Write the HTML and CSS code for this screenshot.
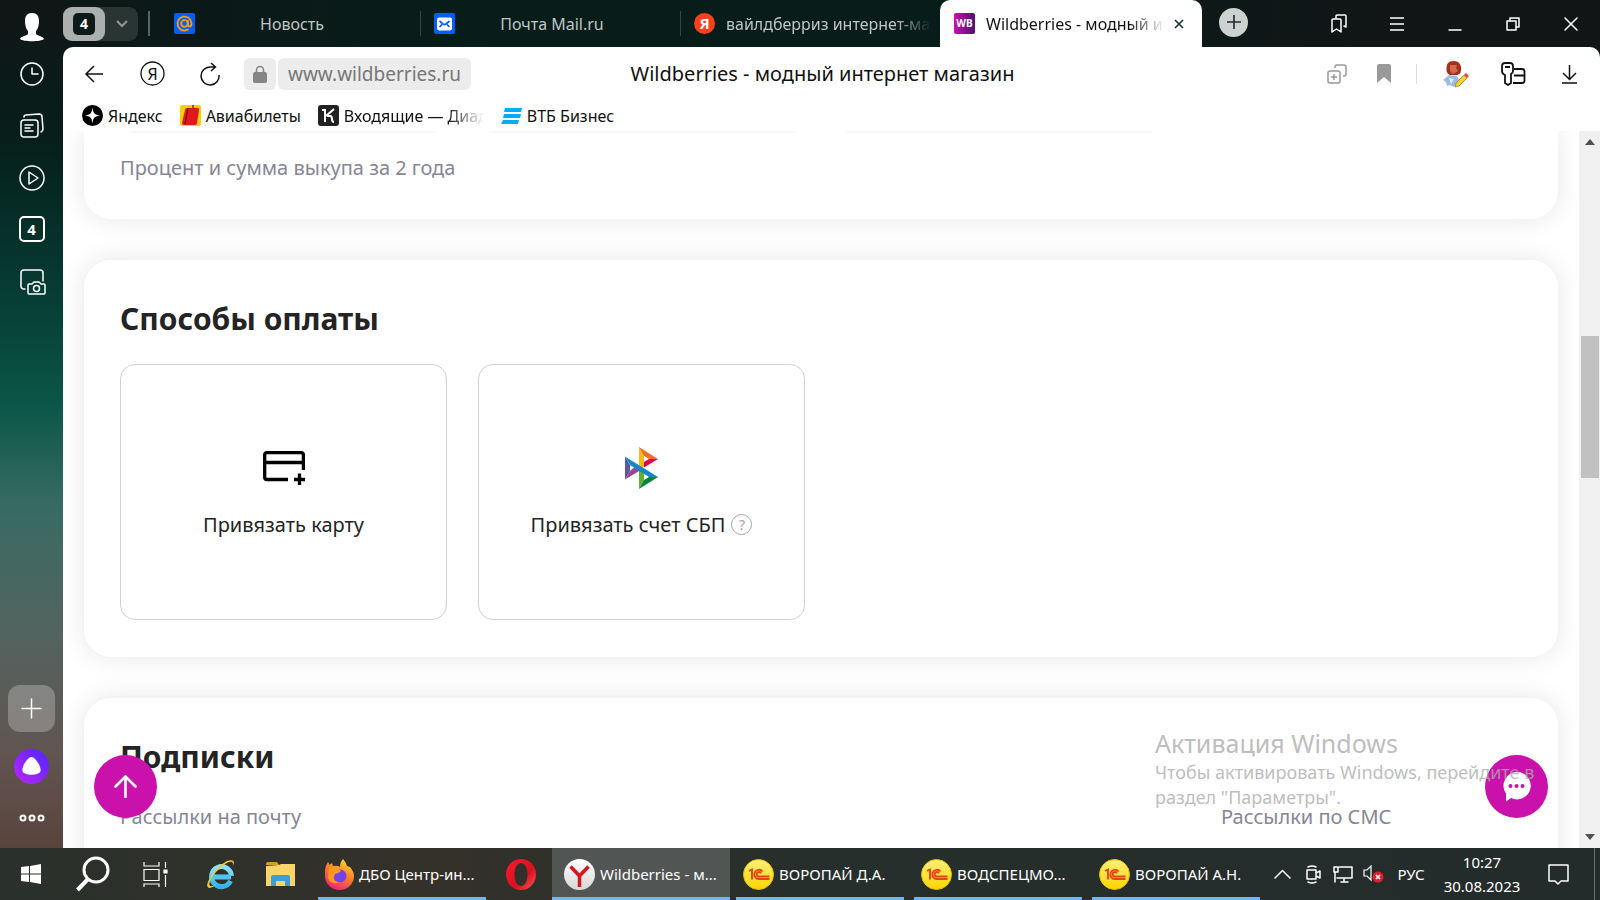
FILE: index.html
```html
<!DOCTYPE html>
<html lang="ru">
<head>
<meta charset="utf-8">
<title>Wildberries - модный интернет магазин</title>
<link rel="stylesheet" href="styles.css">
</head>
<body>
<svg class="defs" aria-hidden="true">
  <defs>
    <linearGradient id="wb" x1="0" y1="0" x2="1" y2="0"><stop offset="0" stop-color="#cb11ab"/><stop offset="1" stop-color="#4a1173"/></linearGradient>
    <linearGradient id="alice" x1="1" y1="0" x2="0" y2="1"><stop offset="0" stop-color="#4a26ff"/><stop offset="1" stop-color="#c026ff"/></linearGradient>
    <linearGradient id="gold" x1="0" y1="0" x2="0" y2="1"><stop offset="0" stop-color="#fff07a"/><stop offset="1" stop-color="#fbd500"/></linearGradient>
    <linearGradient id="fox" x1="0.8" y1="0" x2="0.3" y2="1"><stop offset="0" stop-color="#ffe226"/><stop offset="0.5" stop-color="#ff7a2a"/><stop offset="1" stop-color="#f0207a"/></linearGradient>
    <linearGradient id="opera" x1="0" y1="0" x2="1" y2="1"><stop offset="0" stop-color="#ff1b2d"/><stop offset="0.6" stop-color="#d8101f"/><stop offset="1" stop-color="#ff5a50"/></linearGradient>
    <linearGradient id="ie" x1="0" y1="0" x2="0" y2="1"><stop offset="0" stop-color="#8fe3ff"/><stop offset="1" stop-color="#2fb4ee"/></linearGradient>
    <linearGradient id="silver" x1="0" y1="0" x2="0" y2="1"><stop offset="0" stop-color="#ffffff"/><stop offset="1" stop-color="#d6d6d6"/></linearGradient>
    <symbol id="onec" viewBox="0 0 31 31">
      <circle cx="15.500" cy="15.500" r="15" fill="url(#gold)" stroke="#e8bd00"/>
      <path d="M6 12 9 10.500V20.500M19.500 12.500A4.600 4.600 0 1 0 16 20h10.500M18 14.500A2.200 2.200 0 1 0 16 17.500h10.500" fill="none" stroke="#e8421f" stroke-width="1.900"/>
    </symbol>
  </defs>
</svg>
<div class="desktop">
  <nav class="sidebar" aria-label="Боковая панель">
    <button class="side-btn avatar" aria-label="Профиль"><svg width="26" height="30" viewBox="0 0 26 30"><path fill="#fff" d="M13 1c5 0 7 3 7 8 0 4-1 8-3 10v3c2 2 7 2 8 5-3 3-21 3-24 0 1-3 6-3 8-5v-3c-2-2-3-6-3-10 0-5 2-8 7-8z"/></svg></button>
    <button class="side-btn" aria-label="История"><svg width="28" height="28" viewBox="0 0 28 28" class="line"><circle cx="14" cy="14" r="11"/><path d="M14 8v6h6"/></svg></button>
    <button class="side-btn" aria-label="Коллекции"><svg width="28" height="28" viewBox="0 0 28 28" class="line"><rect x="3" y="8" width="17" height="17" rx="3"/><path d="M6 5c0-1 1-2 2-2l13-1q3 0 3 3l1 12q0 2-2 3M7 13h8M7 16h5M7 19h8"/></svg></button>
    <button class="side-btn" aria-label="Видео"><svg width="28" height="28" viewBox="0 0 28 28" class="line"><circle cx="14" cy="14" r="12"/><path d="M11 8v12l9-6z"/></svg></button>
    <button class="side-btn boxed" aria-label="Вкладки">4</button>
    <button class="side-btn" aria-label="Скриншот"><svg width="28" height="28" viewBox="0 0 28 28" class="line"><path d="M7 21H6q-3 0-3-3V5q0-3 3-3h16q3 0 3 3v8M11 16h3l2-2h5l2 2h3q1 0 1 1v8q0 1-1 1H11q-1 0-1-1v-8q0-1 1-1z"/><circle cx="18.500" cy="20.500" r="3"/></svg></button>
    <span class="spacer"></span>
    <button class="side-add" aria-label="Добавить"><svg width="21" height="21" viewBox="0 0 21 21" class="line"><path d="M10.500 1v19M1 10.500h19"/></svg></button>
    <button class="side-btn alice" aria-label="Алиса"><svg width="35" height="35" viewBox="0 0 35 35"><circle cx="17.500" cy="17.500" r="17.500" fill="url(#alice)"/><path d="M17.500 8c4 0 10 10 9 14-1 5-17 5-18 0-1-4 5-14 9-14z" fill="#fff"/></svg></button>
    <button class="side-btn more" aria-label="Ещё"><svg width="26" height="10" viewBox="0 0 26 10" class="line bold"><circle cx="4" cy="5" r="2.500"/><circle cx="13" cy="5" r="2.500"/><circle cx="22" cy="5" r="2.500"/></svg></button>
  </nav>

  <header class="tabbar">
    <div class="group">
      <button class="group-count" aria-label="Группа вкладок, 4"><span class="house">4</span></button>
      <button class="group-drop" aria-label="Список групп"><svg width="14" height="10" viewBox="0 0 14 10"><path d="M2 2l5 5 5-5" fill="none" stroke="#8f9896" stroke-width="2"/></svg></button>
    </div>
    <div class="tabs">
      <button class="tab"><svg width="21" height="21" viewBox="0 0 21 21"><rect width="21" height="21" rx="2" fill="#005ff9"/><g fill="none" stroke="#ff9e00" stroke-width="1.800"><circle cx="10.500" cy="10.500" r="3.300"/><path d="M13.800 7v4.500c0 3 3.700 2.600 3.700-1a7 7 0 1 0-3 5.800"/></g></svg><span class="tab-text">Новость</span></button>
      <button class="tab"><svg width="21" height="21" viewBox="0 0 21 21"><rect width="21" height="21" rx="2" fill="#005ff9"/><rect x="3" y="4.500" width="15" height="13" rx="2" fill="#fff"/><path d="M5.500 8l3.500 3q1.500 1 3 0l3.500-3M5.500 14l2.500-2.500M15.500 14 13 11.500" fill="none" stroke="#005ff9" stroke-width="1.700"/></svg><span class="tab-text">Почта Mail.ru</span></button>
      <button class="tab"><svg width="21" height="21" viewBox="0 0 21 21"><circle cx="10.500" cy="10.500" r="10.500" fill="#fc3f1d"/><text x="10.500" y="16" class="ya-letter" fill="#fff">Я</text></svg><span class="tab-text fade left">вайлдберриз интернет-ма</span></button>
      <div class="tab active"><svg width="21" height="21" viewBox="0 0 21 21"><rect width="21" height="21" rx="2" fill="url(#wb)"/><text x="10.500" y="14" class="wb-letter" fill="#fff">WB</text></svg><span class="tab-text fade left">Wildberries - модный и</span><button class="tab-close" aria-label="Закрыть вкладку"><svg width="10" height="10" viewBox="0 0 10 10"><path d="M1 1l8 8M9 1 1 9" stroke="#1c2a33" stroke-width="1.600"/></svg></button></div>
    </div>
    <button class="new-tab" aria-label="Новая вкладка"><svg width="14" height="14" viewBox="0 0 14 14"><path d="M7 0v14M0 7h14" stroke="#1c2a33" stroke-width="1.600"/></svg></button>
    <div class="window-controls">
      <button aria-label="Закладки"><svg width="18" height="20" viewBox="0 0 18 20" class="line"><path d="M2 6q0-1 1-1h7q1 0 1 1v12l-4.500-3L2 18zM6 4V2q0-1 1-1h8q1 0 1 1v11l-2-1"/></svg></button>
      <button aria-label="Меню"><svg width="14" height="14" viewBox="0 0 14 14" class="line"><path d="M0 1h14M0 7h14M0 13h14"/></svg></button>
      <button aria-label="Свернуть"><svg width="14" height="14" viewBox="0 0 14 14" class="line"><path d="M1 13h12"/></svg></button>
      <button aria-label="Восстановить"><svg width="14" height="14" viewBox="0 0 14 14" class="line"><path d="M1 4h9v9H1zM4 4V1h9v9h-3"/></svg></button>
      <button aria-label="Закрыть"><svg width="14" height="14" viewBox="0 0 14 14" class="line"><path d="M1 1l12 12M13 1 1 13"/></svg></button>
    </div>
  </header>

  <div class="browser">
    <div class="toolbar">
      <div class="nav">
        <button aria-label="Назад"><svg width="20" height="20" viewBox="0 0 20 20" class="ink"><path d="M19 10H2M10 2l-8 8 8 8"/></svg></button>
        <button aria-label="Яндекс"><svg width="25" height="25" viewBox="0 0 25 25"><circle cx="12.500" cy="12.500" r="11.500" fill="none" stroke="#111" stroke-width="1.300"/><text x="12.500" y="18.500" class="ya-nav" fill="#111">Я</text></svg></button>
        <button aria-label="Обновить"><svg width="22" height="24" viewBox="0 0 22 24" class="ink"><path d="M20 13a9 9 0 1 1-9-8h5M12 1l4.500 4L12 9"/></svg></button>
      </div>
      <div class="address">
        <button class="lock" aria-label="Защищённое соединение"><svg width="14" height="18" viewBox="0 0 14 18"><rect y="7" width="14" height="11" rx="2" fill="#858585"/><path d="M3.500 8V5a3.500 3.500 0 0 1 7 0v3" fill="none" stroke="#858585" stroke-width="1.600"/></svg></button>
        <a class="url" href="#">www.wildberries.ru</a>
      </div>
      <div class="page-title">Wildberries - модный интернет магазин</div>
      <div class="tools">
        <button aria-label="Добавить в коллекцию"><svg width="20" height="20" viewBox="0 0 20 20" class="ink gray"><rect x="1" y="7" width="12" height="12" rx="2"/><path d="M7 10v6M4 13h6M8 4V3q0-2 2-2h7q2 0 2 2v7q0 2-2 2h-1"/></svg></button>
        <button aria-label="В закладки"><svg width="14" height="19" viewBox="0 0 14 19"><path d="M0 2q0-2 2-2h10q2 0 2 2v17l-7-6-7 6z" fill="#999"/></svg></button>
        <span class="rule"></span>
        <button aria-label="Расширение"><svg width="28" height="28" viewBox="0 0 28 28"><path d="M2 20l6-5 8 1 2 4-5 7-4-2-3 1-1-4z" fill="#9db9e0"/><path d="M8 18l5 1-3 5z" fill="#e6effa"/><path d="M6 5q1-4 7-4t7 6q1 7-4 8H9Q4 13 6 5z" fill="#a4301c"/><path d="M9 5h7l-1 3 2 3-5 3-3-3z" fill="#d36a4d"/><path d="M15 23l8-8 3 3-8 8-4 1z" fill="#f5cf2f" stroke="#8c7424" stroke-width=".7"/><path d="M23 15l2-2 3 3-2 2z" fill="#e34b30"/></svg></button>
        <button aria-label="Пароли"><svg width="25" height="24" viewBox="0 0 25 24" class="ink thick"><path d="M12 6.500V4q0-3-3-3H4Q1 1 1 4v5q0 3 3 4v8l3 2 3-2v-9q2-1 2-3zM4 5h5M13 7h8q2.500 0 2.500 2.500v9q0 2.500-2.500 2.500h-9M13 13.500h10.500"/></svg></button>
        <button aria-label="Загрузки"><svg width="17" height="20" viewBox="0 0 17 20" class="ink"><path d="M8.500 1v14M2 9l6.500 6.500L15 9M1 19h15"/></svg></button>
      </div>
    </div>
    <div class="bookmarks">
      <a href="#"><svg width="21" height="21" viewBox="0 0 21 21"><circle cx="10.500" cy="10.500" r="10.500"/><path d="M10.500 2.500c.8 6 2 7.200 8 8-6 .8-7.200 2-8 8-.8-6-2-7.200-8-8 6-.8 7.200-2 8-8z" fill="#fff"/></svg><span>Яндекс</span></a>
      <a href="#"><svg width="21" height="21" viewBox="0 0 21 21"><rect width="21" height="21" rx="2" fill="#fc0"/><path d="M5 5q0-2 2-2h11q1 0 1 2l-2 13q0 2-2 2H4q-2 0-2-2z" fill="#e1171e"/><path d="M8 3l-3 16M13 3V0" stroke="#7c0c10" stroke-width="1.300"/></svg><span>Авиабилеты</span></a>
      <a href="#" class="long"><svg width="21" height="21" viewBox="0 0 21 21"><rect width="21" height="21" rx="3" fill="#222"/><path d="M4 5h3v12M8 11l8-7M9 11h3q2 0 2 3t2 3" fill="none" stroke="#fff" stroke-width="2"/></svg><span class="fade">Входящие — Диад</span></a>
      <a href="#"><svg width="21" height="16" viewBox="0 0 21 16"><path d="M4 0h17l-1 4H3zM3 6h17l-1 4H2zM2 12h16l-1 4H0z" fill="#00aaff"/></svg><span>ВТБ Бизнес</span></a>
    </div>

    <div class="viewport">
      <main class="page">
        <section class="card first">
          <div class="clipped"><i></i><i></i><i></i></div>
          <p class="muted">Процент и сумма выкупа за 2 года</p>
        </section>
        <section class="card">
          <h2>Способы оплаты</h2>
          <div class="methods">
            <button class="method">
              <span class="method-icon"><svg width="42" height="34" viewBox="0 0 42 34"><path d="M25 28.500H4q-2.300 0-2.300-2.300V4Q1.700 1.700 4 1.700h34.200q2.200 0 2.200 2.300v15M1.700 11.500h38.700M36.500 22.500V34M31 28.500h11" fill="none" stroke="#000" stroke-width="3.300"/></svg></span>
              <span>Привязать карту</span>
            </button>
            <button class="method">
              <span class="method-icon"><svg width="34" height="42" viewBox="0 0 34 42"><path d="M0 9.500v23l5-8.500v-6z" fill="#5b57a2"/><path d="M14 0v23l5-3V9z" fill="#fcb718"/><path d="M14 0l19 12H24l-5-3z" fill="#ee7024"/><path d="M33 12 19 20.500V15l5-3z" fill="#d90751"/><path d="M14 23v19l5-9v-8z" fill="#63b22f"/><path d="M33 30 14 42l5-9 5-3z" fill="#07833b"/><path d="M0 32.500 15 23.500 9.500 20 5 24z" fill="#984995"/><path d="M0 9.500l5 8.500 19 12h9z" fill="#1487c9"/></svg></span>
              <span class="with-help">Привязать счет СБП <i class="help">?</i></span>
            </button>
          </div>
        </section>
        <section class="card last">
          <h2>Подписки</h2>
          <div class="subs"><p class="muted">Рассылки на почту</p><p class="muted">Рассылки по СМС</p></div>
        </section>
      </main>
      <button class="fab up" aria-label="Наверх"><svg width="23" height="23" viewBox="0 0 23 23"><path d="M11.500 22V2M1.500 11.500l10-10 10 10" fill="none" stroke="#fff" stroke-width="2.600" stroke-linecap="round"/></svg></button>
      <button class="fab chat" aria-label="Чат"><svg width="29" height="30" viewBox="0 0 29 30"><path d="M15 0a13.700 13.700 0 1 1-6 26l-5 3.500v-8A13.700 13.700 0 0 1 15 0z" fill="#fff"/><g fill="#cb11ab"><circle cx="8.500" cy="14" r="2"/><circle cx="14.500" cy="14" r="2"/><circle cx="20.500" cy="14" r="2"/></g></svg></button>
      <div class="watermark"><strong>Активация Windows</strong><span>Чтобы активировать Windows, перейдите в раздел "Параметры".</span></div>
      <div class="scrollbar" aria-hidden="true"><i class="arrow-up"></i><i class="thumb"></i><i class="arrow-down"></i></div>
    </div>
  </div>

  <footer class="taskbar">
    <button class="task-icon" aria-label="Пуск"><svg width="20" height="20" viewBox="0 0 20 20"><path d="M0 3l8-1v7.500H0zM9 2l11-2v9.500H9zM0 10.500h8V18l-8-1zM9 10.500h11V20L9 18z" fill="#fff"/></svg></button>
    <button class="task-icon" aria-label="Поиск"><svg width="34" height="36" viewBox="0 0 34 36"><circle cx="20" cy="14" r="12" fill="none" stroke="#fff" stroke-width="3"/><path d="M12 23 1.500 34" stroke="#fff" stroke-width="4"/></svg></button>
    <button class="task-icon" aria-label="Представление задач"><svg width="25" height="25" viewBox="0 0 25 25" fill="none" stroke="#fff" stroke-width="1.200"><path d="M1 7.500h15v11H1zM1 0v4h15V0M1 25v-3h15v3M22.500 0v6M22.500 13v12"/><path d="M21 8h3v3h-3z" fill="#fff"/></svg></button>
    <button class="task-icon ie" aria-label="Internet Explorer"><svg width="31" height="31" viewBox="0 0 31 31"><path d="M8 18h18M25.500 22a10 10 0 1 1 1-5" fill="none" stroke="url(#ie)" stroke-width="5"/><path d="M8 16h18v4H8z" fill="#4cc4f5"/><path d="M4 29q-4-2 1-10Q11 8 22 2q6-2 7 1 0 2-2 5 2-4 0-5-3-1-8 3Q9 13 5 22q-2 6 2 5 2 0 5-2-5 4-8 4z" fill="#f7cb2d"/></svg></button>
    <button class="task-icon" aria-label="Проводник"><svg width="29" height="25" viewBox="0 0 29 25"><path d="M0 2q0-2 2-2h9l2 3H0z" fill="#dc9c13"/><path d="M0 4l13-1 2-1h14v22H0z" fill="#fbd468"/><path d="M5 24v-9q0-2 2-2h15q2 0 2 2v9h-5v-5h-9v5z" fill="#3d9be0"/></svg></button>
    <button class="task"><svg width="29" height="31" viewBox="0 0 29 31"><path d="M18 0q3 3 4 7l3 1q4 5 4 9a14.500 14 0 0 1-29 0Q-1 9 3 3q1 1 1 3l3-2 1 3q5-1 7 1 0-5 3-8z" fill="url(#fox)"/><circle cx="15" cy="17" r="6.500" fill="#7542e5"/><path d="M4 9q6-4 10 1l2 2q-3 3-6 3-4 8 5 8-9 4-12-4z" fill="#ff9a1f"/></svg><span>ДБО Центр-ин...</span></button>
    <button class="task-icon opera" aria-label="Opera"><svg width="30" height="31" viewBox="0 0 30 31"><path fill-rule="evenodd" d="M15 0a15 15.500 0 1 0 0 31 15 15.500 0 1 0 0-31zm0 4c4 0 6.500 5 6.500 11.500S19 27 15 27s-6.500-5-6.500-11.500S11 4 15 4z" fill="url(#opera)"/></svg></button>
    <button class="task current"><svg width="31" height="31" viewBox="0 0 31 31"><circle cx="15.500" cy="15.500" r="15.500" fill="url(#silver)"/><path d="M6.500 7.500 15.500 17l9-9.500M15.500 16v12" fill="none" stroke="#d8141c" stroke-width="3.500"/></svg><span>Wildberries - м...</span></button>
    <button class="task"><svg width="31" height="31"><use href="#onec"/></svg><span>ВОРОПАЙ Д.А.</span></button>
    <button class="task"><svg width="31" height="31"><use href="#onec"/></svg><span>ВОДСПЕЦМО...</span></button>
    <button class="task"><svg width="31" height="31"><use href="#onec"/></svg><span>ВОРОПАЙ А.Н.</span></button>
    <div class="tray">
      <button aria-label="Скрытые значки"><svg width="17" height="10" viewBox="0 0 17 10" class="line"><path d="M1 9l7.500-7.500L16 9"/></svg></button>
      <button aria-label="Камера"><svg width="15" height="19" viewBox="0 0 15 19" class="line"><path d="M1 5h9v9H1zM10 8l4-2v7l-4-2M2 2q4-2 8 0M2 17q4 2 8 0"/></svg></button>
      <button aria-label="Сеть"><svg width="20" height="17" viewBox="0 0 20 17" class="line"><path d="M6 1h13v11H4M11 12v4M8 16h7M1 1h4v5H1zM2 6v10"/></svg></button>
      <button aria-label="Звук выключен"><svg width="21" height="18" viewBox="0 0 21 18"><path d="M1 5h3l4-4v14l-4-4H1z" fill="none" stroke="#fff" stroke-width="1.200"/><circle cx="15" cy="12" r="5.500" fill="#e0202c"/><path d="M13 10l4 4M17 10l-4 4" stroke="#fff" stroke-width="1.500"/></svg></button>
      <button class="lang">РУС</button>
      <button class="clock"><time>10:27</time><time>30.08.2023</time></button>
      <button class="notify" aria-label="Уведомления"><svg width="21" height="21" viewBox="0 0 21 21" class="line"><path d="M1 1h19v16h-7l-3 3-3-3H1z"/></svg></button>
    </div>
  </footer>
</div>
</body>
</html>
```
FILE: styles.css
```css
* { box-sizing: border-box; }
body { margin: 0; font-family: "Noto Sans", "Open Sans", sans-serif; color: #242424; }
button { border: 0; padding: 0; margin: 0; background: none; font: inherit; color: inherit; display: flex; align-items: center; justify-content: center; }
a { color: inherit; text-decoration: none; }
h2, p { margin: 0; }
svg { display: block; flex: none; }
.defs { position: absolute; width: 0; height: 0; }
.line { fill: none; stroke: #fff; stroke-width: 1.5; stroke-linecap: round; stroke-linejoin: round; }
.line.bold { stroke-width: 2; }
.ink { fill: none; stroke: #111; stroke-width: 1.5; }
.ink.gray { stroke: #999; }
.ink.thick { stroke-width: 1.8; }
text { text-anchor: middle; font-weight: 700; }
.ya-letter { font-size: 15px; }
.ya-nav { font-size: 16px; font-weight: 400; }
.wb-letter { font-size: 10px; }

.desktop {
  display: grid;
  grid-template-columns: 63px minmax(0, 1fr);
  grid-template-rows: 47px minmax(0, 1fr) 52px;
  height: 100vh;
  overflow: hidden;
  background: linear-gradient(180deg, #111516 0, #061f1b 16%, #063d34 33%, #0b5648 45%, #376b62 56%, #536460 70%, #625451 84%, #58443d 94%);
}

.sidebar { grid-row: 1 / 3; display: flex; flex-direction: column; align-items: center; padding-top: 13px; }
.side-btn { height: 28px; margin-bottom: 24px; }
.side-btn.avatar { margin-bottom: 19px; }
.boxed { width: 26px; height: 26px; margin-bottom: 26px; border: 2px solid #fff; border-radius: 5px; color: #fff; font-size: 15px; font-weight: 700; }
.spacer { flex: 1; }
.side-add { width: 47px; height: 47px; border-radius: 12px; background: rgba(255, 255, 255, .25); }
.side-btn.alice { height: 35px; margin: 17px 0 24px; }
.side-btn.more { height: 20px; margin-bottom: 20px; }

.tabbar { display: flex; align-items: center; background: linear-gradient(90deg, #0c1817, #081d1a 30%, #081d1a 60%, #111516 85%); }
.group { display: flex; flex: none; align-items: center; width: 75px; height: 34px; border-radius: 9px; background: #2a3533; }
.group-count { width: 42px; height: 34px; border-radius: 9px; background: #abafae; }
.house { width: 22px; height: 22px; border-radius: 5px; background: #0c1b19; color: #fff; font-size: 14px; font-weight: 700; line-height: 22px; }
.group-drop { flex: 1; height: 34px; }
.tabs { display: flex; flex: 0 1 1054px; align-self: stretch; align-items: center; min-width: 0; margin-left: 10px; }
.tab { position: relative; flex: 0 1 260px; min-width: 0; height: 47px; padding-left: 14px; gap: 11px; justify-content: flex-start; color: #bfc5c4; font-size: 17px; }
.tabs > .tab::before { content: ""; position: absolute; left: 0; top: 11px; width: 1px; height: 25px; background: #3a4644; }
.tabs > .tab:first-child { flex-basis: 272px; padding-left: 26px; }
.tabs > .tab:first-child::before { width: 2px; background: #59625f; }
.tab-text { flex: 1; min-width: 0; overflow: hidden; white-space: nowrap; text-align: center; padding-right: 42px; font-size: 16px; }
.tab-text.left { text-align: left; padding-right: 0; }
.fade { overflow: hidden; -webkit-mask-image: linear-gradient(90deg, #000 calc(100% - 36px), transparent); mask-image: linear-gradient(90deg, #000 calc(100% - 36px), transparent); }
.tabs > .tab:nth-child(3) { padding-right: 9px; }
.tab.active { display: flex; align-items: center; flex-basis: 262px; background: #fff; color: #111; border-radius: 10px 10px 0 0; }
.tab.active::before { display: none; }
.tab-close { width: 34px; height: 34px; margin: 0 6px 0 -8px; }
.tab.active .fade { margin-right: -6px; }
.new-tab { width: 29px; height: 29px; flex: none; margin: -3px 0 0 17px; border-radius: 50%; background: #cdd2d1; }
.window-controls { display: flex; margin-left: auto; }
.window-controls button { width: 58px; height: 46px; }

.browser { display: flex; flex-direction: column; min-height: 0; background: #fff; border-radius: 10px 10px 0 0; overflow: hidden; }
.toolbar { position: relative; display: flex; align-items: center; height: 53px; flex: none; }
.nav { display: flex; margin-left: 2px; }
.nav button { width: 58px; height: 40px; }
.address { display: flex; gap: 2px; margin-left: 5px; }
.lock { width: 32px; height: 32px; border-radius: 6px; background: #ececec; }
.url { height: 32px; padding: 0 10px; border-radius: 6px; background: #ececec; color: #777; font-size: 19px; line-height: 32px; }
.page-title { position: absolute; left: 0; right: 18px; text-align: center; font-size: 20px; line-height: 32px; color: #111; pointer-events: none; }
.tools { display: flex; align-items: center; margin-left: auto; padding-right: 3px; }
.tools button { width: 58px; height: 40px; }
.tools button:nth-child(2) { width: 36px; }
.rule { width: 1px; height: 20px; margin: 0 9px 0 14px; background: #ddd; }
.tools button:last-child { width: 55px; }
.bookmarks { display: flex; align-items: center; gap: 17px; height: 31px; flex: none; padding-left: 19px; font-size: 16px; color: #111; }
.bookmarks a { display: flex; align-items: center; gap: 5px; white-space: nowrap; }
.long { width: 166px; }

.viewport { position: relative; flex: 1; min-height: 0; display: flex; overflow: hidden; }
.page { flex: 1; min-width: 0; padding: 0 21px; display: flex; flex-direction: column; gap: 41px; }
.card { flex: none; padding: 38px 36px 37px; border-radius: 27px; background: #fff; box-shadow: 0 0 26px rgba(0, 0, 0, .1); }
.card.first { height: 88px; padding-top: 0; border-radius: 0 0 27px 27px; }
.card.last { height: 190px; }
.clipped { display: flex; gap: 31px; height: 2px; align-items: flex-end; }
.clipped i { width: 327px; height: 40px; border-radius: 16px; background: #f6f6f6; }
.muted { color: #868695; font-size: 20px; line-height: 28px; }
.first .muted { margin-top: 21px; }
h2 { font-size: 30px; font-weight: 700; line-height: 41px; }
.methods { display: flex; gap: 31px; margin-top: 25px; }
.method { width: 327px; height: 256px; flex-direction: column; gap: 21px; border: 1px solid #d1cfd7; border-radius: 15px; font-size: 20px; line-height: 28px; }
.method-icon { display: flex; align-items: center; justify-content: center; height: 44px; }
.with-help { display: flex; align-items: center; gap: 6px; }
.help { width: 21px; height: 21px; border: 1px solid #a6a5b0; border-radius: 50%; color: #a6a5b0; font-size: 14px; font-style: normal; line-height: 19px; text-align: center; }
.subs { display: grid; grid-template-columns: 1101px 1fr; margin-top: 26px; }
.fab { position: absolute; bottom: 30px; width: 63px; height: 63px; border-radius: 50%; background: #cb11ab; }
.up { left: 31px; }
.chat { right: 52px; }
.watermark { position: absolute; right: 57px; bottom: 38px; width: 388px; color: rgba(172, 172, 172, .8); font-size: 18px; line-height: 25px; pointer-events: none; }
.watermark strong, .watermark span { display: block; }
.watermark strong { font-size: 25px; font-weight: 400; line-height: 34px; }
.scrollbar { display: flex; flex-direction: column; align-items: center; width: 21px; padding: 8px 0; background: #f0f0f0; }
.thumb { width: 18px; height: 142px; margin-top: 191px; background: #c1c1c1; }
.arrow-up, .arrow-down { border: 5px solid transparent; }
.arrow-up { border-top: 0; border-bottom: 6px solid #505050; }
.arrow-down { margin-top: auto; border-bottom: 0; border-top: 6px solid #505050; }

.taskbar { grid-column: 1 / 3; display: flex; align-items: stretch; background: linear-gradient(90deg, #2a302c, #34312a 27%, #262f2c 50%, #232c2a); color: #fff; font-size: 15px; }
.task-icon { width: 62px; flex: none; }
.task-icon.ie { width: 68px; }
.task-icon:nth-child(5) { width: 53px; margin-right: 11px; }
.task-icon.opera { width: 58px; margin: 0 2px 0 6px; }
.task { width: 168px; flex: 0 1 168px; min-width: 0; margin-right: 10px; padding-left: 7px; gap: 5px; justify-content: flex-start; border-bottom: 3px solid #76b4ee; white-space: nowrap; overflow: hidden; padding-top: 3px; }
.task:nth-child(6) { margin-right: 0; }
.task.current { flex-basis: 178px; margin-right: 6px; padding-left: 12px; background: #515654; }
.task:nth-child(11) { margin-right: 0; }
.tray { display: flex; align-items: stretch; margin-left: auto; margin-right: 5px; border-right: 1px solid #69706d; }
.tray button { width: 30px; }
.tray button:first-child { width: 32px; }
.tray .lang { width: 46px; }
.tray .clock { width: 96px; flex-direction: column; line-height: 24px; }
.tray .notify { width: 56px; margin-right: 8px; }
```
